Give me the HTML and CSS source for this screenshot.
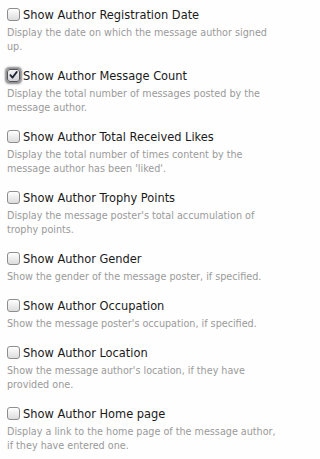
FILE: index.html
```html
<!DOCTYPE html>
<html>
<head>
<meta charset="utf-8">
<link rel="stylesheet" href="styles.css">
</head>
<body>
<ul class="options">
  <li class="option">
    <label class="title"><span class="box"></span>Show Author Registration Date</label>
    <p class="hint">Display the date on which the message author signed up.</p>
  </li>
  <li class="option">
    <label class="title"><span class="box checked"><svg viewBox="0 0 12 12" width="12" height="12"><path d="M2.6 6.2 L5 8.8 L9.6 2.6" fill="none" stroke="#1c2230" stroke-width="1.9" stroke-linecap="round" stroke-linejoin="round"/></svg></span>Show Author Message Count</label>
    <p class="hint">Display the total number of messages posted by the message author.</p>
  </li>
  <li class="option">
    <label class="title"><span class="box"></span>Show Author Total Received Likes</label>
    <p class="hint">Display the total number of times content by the message author has been 'liked'.</p>
  </li>
  <li class="option">
    <label class="title"><span class="box"></span>Show Author Trophy Points</label>
    <p class="hint">Display the message poster's total accumulation of trophy points.</p>
  </li>
  <li class="option">
    <label class="title"><span class="box"></span>Show Author Gender</label>
    <p class="hint">Show the gender of the message poster, if specified.</p>
  </li>
  <li class="option">
    <label class="title"><span class="box"></span>Show Author Occupation</label>
    <p class="hint">Show the message poster's occupation, if specified.</p>
  </li>
  <li class="option">
    <label class="title"><span class="box"></span>Show Author Location</label>
    <p class="hint">Show the message author's location, if they have provided one.</p>
  </li>
  <li class="option">
    <label class="title"><span class="box"></span>Show Author Home page</label>
    <p class="hint">Display a link to the home page of the message author, if they have entered one.</p>
  </li>
</ul>
</body>
</html>
```
FILE: styles.css
```css
html, body {
  margin: 0;
  padding: 0;
  background: #fefefe;
}
body {
  font-family: "DejaVu Sans Condensed", "DejaVu Sans", sans-serif;
}
.options {
  list-style: none;
  box-sizing: border-box;
  width: 281px;
  margin: 0;
  padding: 4px 0 0 7px;
  display: flex;
  flex-direction: column;
  gap: 11px;
}
.option {
  display: flex;
  flex-direction: column;
  gap: 2px;
}
.title {
  display: flex;
  align-items: center;
  gap: 3px;
  height: 20px;
  font-size: 12.7px;
  color: #1a1a1a;
}
.box {
  box-sizing: border-box;
  width: 13px;
  height: 13px;
  flex: none;
  border: 1px solid #8e8e8e;
  border-radius: 3px;
  background: linear-gradient(#ffffff, #dcdcdc);
  display: flex;
  align-items: center;
  justify-content: center;
}
.box.checked {
  border-color: #555;
  background: linear-gradient(#f4f4f4, #cfd0d4);
  box-shadow: 0 0 2px 1.5px rgba(40, 40, 50, 0.55);
}
.box svg {
  display: block;
}
.hint {
  margin: 0;
  font-size: 10.7px;
  line-height: 14px;
  color: #9a9a9a;
}
```
